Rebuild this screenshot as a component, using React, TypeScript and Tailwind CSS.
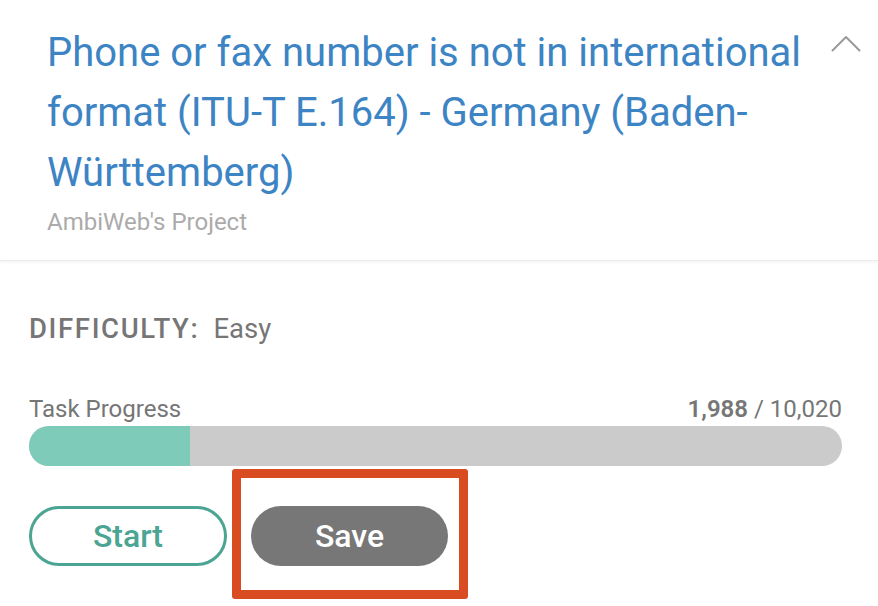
import { ReactNode } from "react";

const FONT = "font-['Roboto','Liberation_Sans',sans-serif]";

const TASK = {
  title: "Phone or fax number is not in international format (ITU-T E.164) - Germany (Baden-Württemberg)",
  project: "AmbiWeb's Project",
  difficulty: "Easy",
  done: 1988,
  total: 10020,
};

function ChevronUp() {
  return (
    <svg width="30" height="17" viewBox="0 0 30 17" fill="none" className="shrink-0">
      <path d="M1.5 15.5 L15 2 L28.5 15.5" stroke="#9a9a9a" strokeWidth="2" strokeLinecap="round" strokeLinejoin="round" />
    </svg>
  );
}

function Highlight({ children }: { children: ReactNode }) {
  // annotation box drawn over the Save button
  return (
    <div className="relative">
      {children}
      <span className="pointer-events-none absolute -left-[19px] -right-[20px] -top-[37px] -bottom-[33px] rounded-[3px] border-[9px] border-[#d94c22]" />
    </div>
  );
}

export default function App() {
  const pct = (TASK.done / TASK.total) * 100;

  return (
    <div className={`${FONT} w-[878px] h-[606px] overflow-hidden bg-white`}>
      <header className="flex items-start justify-between pl-[47px] pr-[17px] pt-[23px] pb-[24px] border-b border-[#ececec] shadow-[0_2px_3px_rgba(0,0,0,0.04)]">
        <div className="w-[770px]">
          <h1 className="text-[40px] leading-[60px] text-[#3d84c4] font-normal">{TASK.title}</h1>
          <p className="mt-[5px] text-[24px] leading-[28px] text-[#ababab]">{TASK.project}</p>
        </div>
        <div className="pt-[12px]">
          <ChevronUp />
        </div>
      </header>

      <section className="px-[29px] pt-[52px]">
        <div className="flex items-baseline text-[27.5px] leading-[32px] text-[#767676]">
          <span className="font-medium tracking-[0.06em]">DIFFICULTY:</span>
          <span className="ml-[14px]">{TASK.difficulty}</span>
        </div>

        <div className="mt-[50px] flex items-baseline justify-between pr-[7px] text-[24px] leading-[28px] text-[#767676]">
          <span>Task Progress</span>
          <span>
            <span className="font-semibold">{TASK.done.toLocaleString("en-US")}</span>
            {" / "}
            {TASK.total.toLocaleString("en-US")}
          </span>
        </div>

        <div className="mt-[3px] mr-[7px] h-[40px] rounded-full bg-[#cbcbcb] overflow-hidden">
          <div className="h-full bg-[#7ecbba]" style={{ width: `${pct}%` }} />
        </div>

        <div className="mt-[40px] flex items-center gap-[24px]">
          <button className="w-[198px] h-[60px] rounded-full border-[3px] border-[#4ba592] text-[#4ba592] text-[32px] font-medium">
            Start
          </button>
          <Highlight>
            <button className="w-[197px] h-[60px] rounded-full bg-[#777777] text-white text-[32px] font-medium">
              Save
            </button>
          </Highlight>
        </div>
      </section>
    </div>
  );
}
